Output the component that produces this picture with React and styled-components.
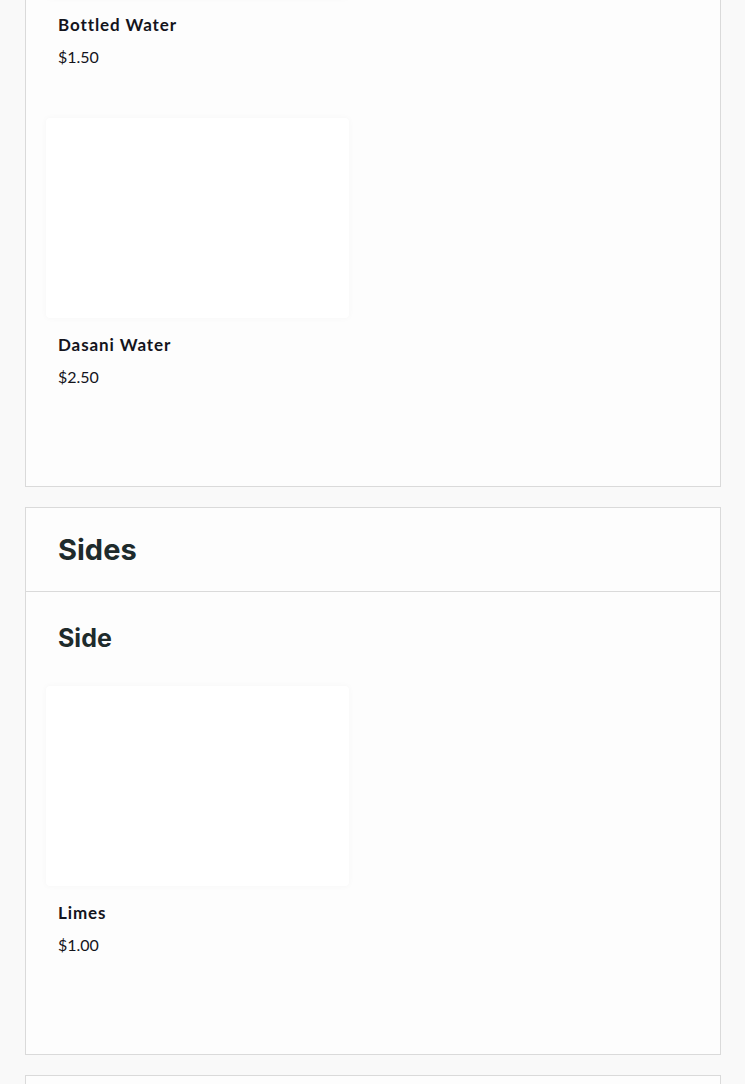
import React from 'react'
import styled, { createGlobalStyle } from 'styled-components'

const GlobalStyle = createGlobalStyle`
  html, body {
    margin: 0;
    padding: 0;
    background: #f9f9f9;
  }
  body {
    font-family: Lato, "Liberation Sans", sans-serif;
    overflow: hidden;
  }
`

const menu = [
  {
    id: 'drinks',
    sections: [
      {
        id: 'water',
        items: [
          { name: 'Bottled Water', price: '$1.50' },
          { name: 'Dasani Water', price: '$2.50' },
        ],
      },
    ],
  },
  {
    id: 'sides',
    title: 'Sides',
    sections: [
      {
        id: 'side',
        title: 'Side',
        items: [{ name: 'Limes', price: '$1.00' }],
      },
    ],
  },
  {
    id: 'extras',
    sections: [],
  },
]

function ItemCard({ name, price }) {
  return (
    <Card>
      <Photo />
      <CardBody>
        <ItemName>{name}</ItemName>
        <Price>{price}</Price>
      </CardBody>
    </Card>
  )
}

export default function App() {
  return (
    <>
      <GlobalStyle />
      <Page>
        {menu.map((cat) => (
          <Category key={cat.id}>
            {cat.title && (
              <CategoryHeader>
                <CategoryTitle>{cat.title}</CategoryTitle>
              </CategoryHeader>
            )}
            {cat.sections.map((sec) => (
              <Section key={sec.id} $withTitle={!!sec.title}>
                {sec.title && <SectionTitle>{sec.title}</SectionTitle>}
                <ItemGrid>
                  {sec.items.map((item) => (
                    <ItemCard key={item.name} {...item} />
                  ))}
                </ItemGrid>
              </Section>
            ))}
          </Category>
        ))}
      </Page>
    </>
  )
}

const Page = styled.main`
  display: flex;
  flex-direction: column;
  gap: 20px;
  margin-top: -224px;
  padding: 0 24px 0 25px;
`

const Category = styled.section`
  background: #fdfdfd;
  border: 1px solid #dadada;
  min-height: 120px;
`

const CategoryHeader = styled.header`
  display: flex;
  align-items: center;
  height: 83px;
  padding: 0 32px;
  border-bottom: 1px solid #dadada;
`

const CategoryTitle = styled.h2`
  margin: 0;
  font-family: Inter, "Noto Sans", sans-serif;
  font-weight: 700;
  font-size: 29px;
  line-height: 32px;
  color: #1e2b2c;
`

const Section = styled.div`
  padding: ${(p) => (p.$withTitle ? '32px' : '21px')} 20px 48px;
`

const SectionTitle = styled.h3`
  margin: 0 12px 34px;
  font-family: Inter, "Noto Sans", sans-serif;
  font-weight: 700;
  font-size: 25px;
  line-height: 28px;
  color: #1e2b2c;
`

const ItemGrid = styled.div`
  display: grid;
  grid-template-columns: 303px;
`

const Card = styled.article`
  display: flex;
  flex-direction: column;
`

const Photo = styled.div`
  height: 200px;
  background: #ffffff;
  border-radius: 4px;
  box-shadow: 0 0 6px rgba(0, 0, 0, 0.035);
`

const CardBody = styled.div`
  display: flex;
  flex-direction: column;
  gap: 8px;
  padding: 15px 12px 49px;
`

const ItemName = styled.h4`
  margin: 0;
  font-size: 17px;
  line-height: 24px;
  font-weight: 700;
  letter-spacing: 0.9px;
  color: #14141c;
`

const Price = styled.span`
  font-size: 16px;
  line-height: 24px;
  color: #14141c;
`
